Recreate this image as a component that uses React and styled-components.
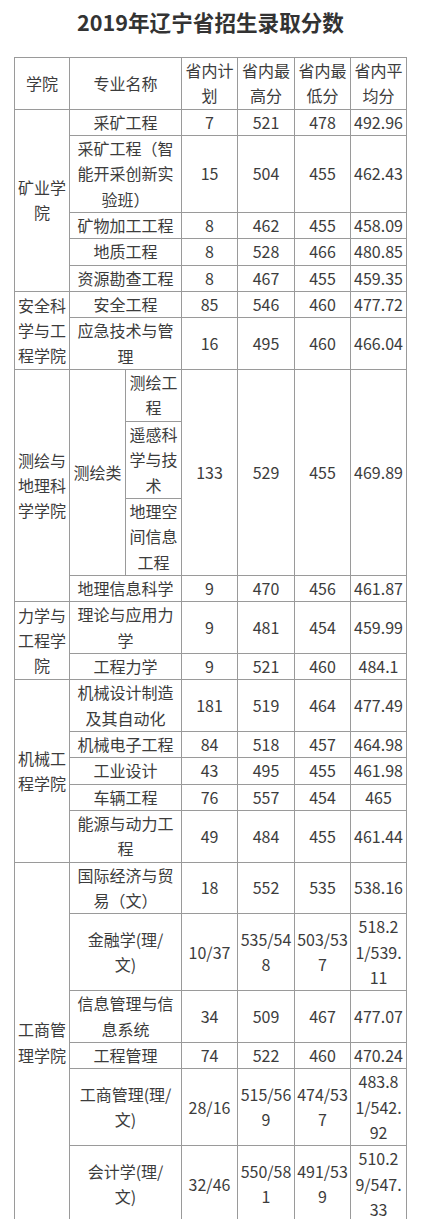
import React from 'react';
import styled, { createGlobalStyle } from 'styled-components';

const GlobalStyle = createGlobalStyle`
  body {
    margin: 0;
    background: #fff;
    font-family: "Noto Sans CJK SC", "Noto Sans", sans-serif;
    color: #3c3c3c;
  }
`;

const Page = styled.div`
  width: 421px;
  padding-top: 7px;
`;

const Title = styled.h1`
  margin: 0;
  font-size: 21.6px;
  line-height: 30px;
  font-weight: 700;
  text-align: center;
  color: #333;
`;

const Table = styled.table`
  margin: 20px 0 0 14px;
  border-collapse: collapse;
  table-layout: fixed;
  width: 392px;
  font-size: 16px;
  line-height: 25.35px;
`;

const Cell = styled.td`
  border: 1px solid #9a9a9a;
  padding: 0 ${(p) => p.$pad || 1}px;
  text-align: center;
  vertical-align: middle;
  word-break: break-all;
`;

const HeadCell = styled(Cell).attrs({ as: 'th' })`
  font-weight: 400;
`;

const groups = [
  {
    college: '矿业学院',
    rows: [
      { major: '采矿工程', plan: '7', max: '521', min: '478', avg: '492.96' },
      { major: '采矿工程（智能开采创新实验班）', plan: '15', max: '504', min: '455', avg: '462.43' },
      { major: '矿物加工工程', plan: '8', max: '462', min: '455', avg: '458.09' },
      { major: '地质工程', plan: '8', max: '528', min: '466', avg: '480.85' },
      { major: '资源勘查工程', plan: '8', max: '467', min: '455', avg: '459.35' },
    ],
  },
  {
    college: '安全科学与工程学院',
    rows: [
      { major: '安全工程', plan: '85', max: '546', min: '460', avg: '477.72' },
      { major: '应急技术与管理', plan: '16', max: '495', min: '460', avg: '466.04' },
    ],
  },
  {
    college: '测绘与地理科学学院',
    rows: [
      {
        major: '测绘类',
        subs: ['测绘工程', '遥感科学与技术', '地理空间信息工程'],
        plan: '133', max: '529', min: '455', avg: '469.89',
      },
      { major: '地理信息科学', plan: '9', max: '470', min: '456', avg: '461.87' },
    ],
  },
  {
    college: '力学与工程学院',
    rows: [
      { major: '理论与应用力学', plan: '9', max: '481', min: '454', avg: '459.99' },
      { major: '工程力学', plan: '9', max: '521', min: '460', avg: '484.1' },
    ],
  },
  {
    college: '机械工程学院',
    rows: [
      { major: '机械设计制造及其自动化', plan: '181', max: '519', min: '464', avg: '477.49' },
      { major: '机械电子工程', plan: '84', max: '518', min: '457', avg: '464.98' },
      { major: '工业设计', plan: '43', max: '495', min: '455', avg: '461.98' },
      { major: '车辆工程', plan: '76', max: '557', min: '454', avg: '465' },
      { major: '能源与动力工程', plan: '49', max: '484', min: '455', avg: '461.44' },
    ],
  },
  {
    college: '工商管理学院',
    rows: [
      { major: '国际经济与贸易（文）', plan: '18', max: '552', min: '535', avg: '538.16' },
      { major: ['金融学(理/', '文)'], plan: '10/37', max: '535/548', min: '503/537', avg: ['518.2', '1/539.', '11'] },
      { major: '信息管理与信息系统', plan: '34', max: '509', min: '467', avg: '477.07' },
      { major: '工程管理', plan: '74', max: '522', min: '460', avg: '470.24' },
      { major: ['工商管理(理/', '文)'], plan: '28/16', max: '515/569', min: '474/537', avg: ['483.8', '1/542.', '92'] },
      { major: ['会计学(理/', '文)'], plan: '32/46', max: '550/581', min: '491/539', avg: ['510.2', '9/547.', '33'] },
    ],
  },
];

const Lines = ({ value }) =>
  Array.isArray(value)
    ? value.map((l, i) => (
        <React.Fragment key={i}>
          {i > 0 && <br />}
          {l}
        </React.Fragment>
      ))
    : value;

const Scores = ({ row, span }) => (
  <>
    <Cell rowSpan={span}>{row.plan}</Cell>
    <Cell rowSpan={span}>{row.max}</Cell>
    <Cell rowSpan={span}>{row.min}</Cell>
    <Cell rowSpan={span}>
      <Lines value={row.avg} />
    </Cell>
  </>
);

const groupRows = (g) => {
  const span = g.rows.reduce((n, r) => n + (r.subs ? r.subs.length : 1), 0);
  const trs = [];
  g.rows.forEach((r, i) => {
    if (r.subs) {
      r.subs.forEach((s, j) => {
        trs.push(
          <tr key={`${g.college}-${i}-${j}`}>
            {i === 0 && j === 0 && (
              <Cell rowSpan={span} $pad={3}>{g.college}</Cell>
            )}
            {j === 0 && (
              <Cell rowSpan={r.subs.length} $pad={3}>{r.major}</Cell>
            )}
            <Cell $pad={3}>{s}</Cell>
            {j === 0 && <Scores row={r} span={r.subs.length} />}
          </tr>
        );
      });
    } else {
      trs.push(
        <tr key={`${g.college}-${i}`}>
          {i === 0 && (
            <Cell rowSpan={span} $pad={3}>{g.college}</Cell>
          )}
          <Cell colSpan={2} $pad={6}>
            <Lines value={r.major} />
          </Cell>
          <Scores row={r} span={1} />
        </tr>
      );
    }
  });
  return trs;
};

export default function App() {
  return (
    <Page>
      <GlobalStyle />
      <Title>2019年辽宁省招生录取分数</Title>
      <Table>
        <colgroup>
          <col style={{ width: 55 }} />
          <col style={{ width: 56 }} />
          <col style={{ width: 56 }} />
          <col style={{ width: 56 }} />
          <col style={{ width: 57 }} />
          <col style={{ width: 56 }} />
          <col style={{ width: 56 }} />
        </colgroup>
        <thead>
          <tr>
            <HeadCell $pad={3}>学院</HeadCell>
            <HeadCell colSpan={2} $pad={6}>专业名称</HeadCell>
            <HeadCell>省内计划</HeadCell>
            <HeadCell>省内最高分</HeadCell>
            <HeadCell>省内最低分</HeadCell>
            <HeadCell>省内平均分</HeadCell>
          </tr>
        </thead>
        <tbody>{groups.map(groupRows)}</tbody>
      </Table>
    </Page>
  );
}
